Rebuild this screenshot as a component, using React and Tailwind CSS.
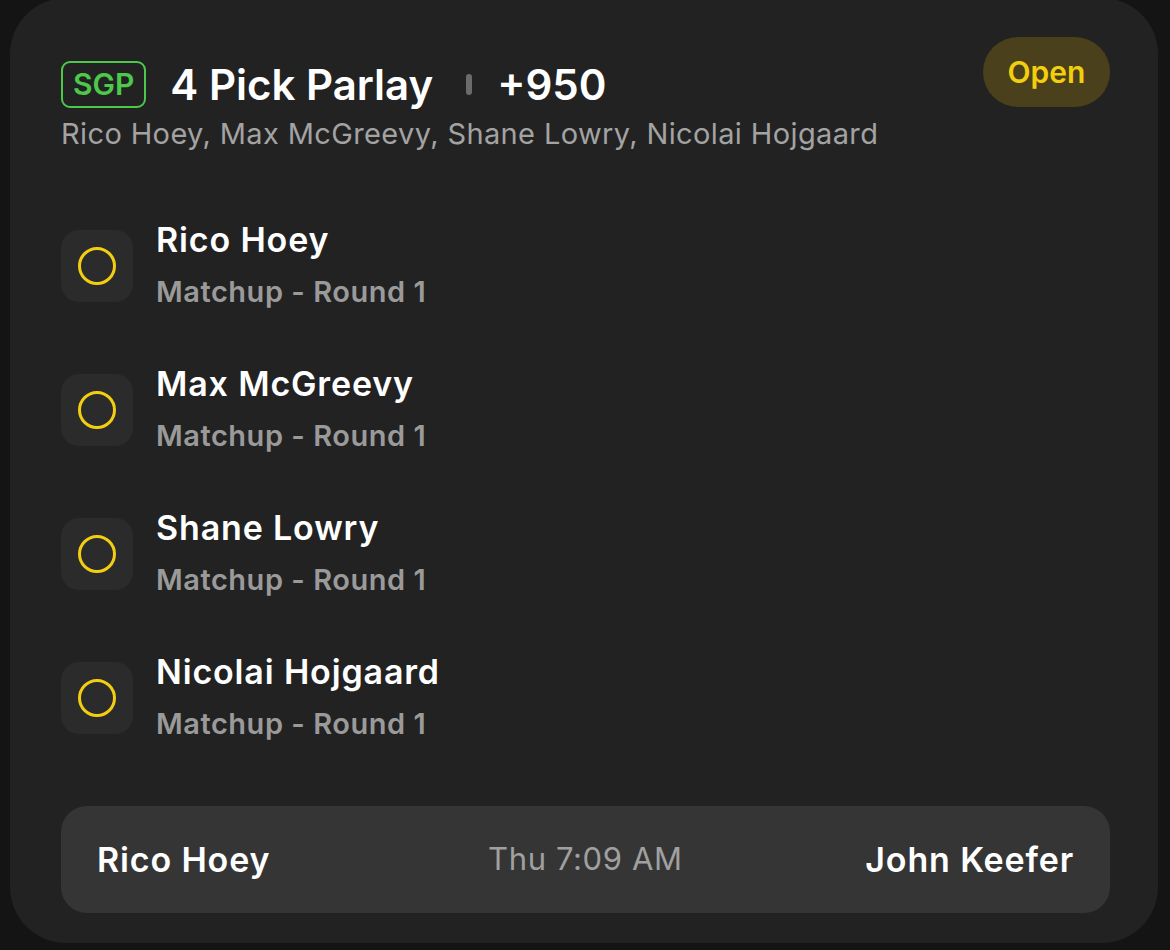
const legs = [
    { name: 'Rico Hoey', market: 'Matchup - Round 1' },
    { name: 'Max McGreevy', market: 'Matchup - Round 1' },
    { name: 'Shane Lowry', market: 'Matchup - Round 1' },
    { name: 'Nicolai Hojgaard', market: 'Matchup - Round 1' },
];

function LegRow({ name, market }) {
    return (
        <div className="flex items-center">
            <div className="w-[72px] h-[72px] rounded-[18px] bg-[#2b2b2b] flex items-center justify-center shrink-0">
                <div className="w-[38px] h-[38px] rounded-full border-[3px] border-[#f2cd12]" />
            </div>
            <div className="ml-[23px] flex flex-col gap-[16px]">
                <div className="text-[34px] leading-[36px] font-semibold tracking-[0.025em] text-white">{name}</div>
                <div className="text-[29px] leading-[36px] font-semibold tracking-[0.018em] text-[#9a9a9a]">{market}</div>
            </div>
        </div>
    );
}

export default function App() {
    return (
        <div
            className="min-h-[950px] w-[1170px] bg-[#141414] overflow-hidden"
            style={{ fontFamily: 'Inter, "Noto Sans", sans-serif' }}
        >
            <div className="ml-[10px] w-[1148px] h-[945px] -mt-[2px] rounded-[56px] bg-[#222222] pt-[39px] pl-[51px] pr-[48px]">
                <div className="flex justify-between items-start">
                    <div className="pt-[24px]">
                        <div className="flex items-center h-[47px]">
                            <div className="h-[47px] px-[10px] rounded-[9px] border-2 border-[#4cc94a] text-[#4cc94a] text-[30px] font-semibold flex items-center">
                                SGP
                            </div>
                            <div className="ml-[24px] text-[42px] font-semibold text-white leading-none">4 Pick Parlay</div>
                            <div className="ml-[33px] w-[6px] h-[21px] rounded-full bg-[#6b6b6b]" />
                            <div className="ml-[25px] text-[42px] font-semibold text-white leading-none">+950</div>
                        </div>
                        <div className="mt-[8px] text-[29px] leading-[36px] tracking-[0.013em] text-[#a3a3a3]">
                            Rico Hoey, Max McGreevy, Shane Lowry, Nicolai Hojgaard
                        </div>
                    </div>
                    <div className="h-[70px] w-[127px] rounded-full bg-[#4a401b] flex items-center justify-center text-[30px] font-semibold text-[#f2cf0e]">
                        Open
                    </div>
                </div>

                <div className="mt-[70px] flex flex-col gap-[56px]">
                    {legs.map((leg) => (
                        <LegRow key={leg.name} name={leg.name} market={leg.market} />
                    ))}
                </div>

                <div className="mt-[64px] h-[107px] rounded-[26px] bg-[#353535] px-[36px] flex items-center justify-between">
                    <div className="text-[34px] font-semibold tracking-[0.025em] text-white">Rico Hoey</div>
                    <div className="text-[31px] tracking-[0.02em] text-[#a0a0a0] ml-[35px]">Thu 7:09 AM</div>
                    <div className="text-[34px] font-semibold tracking-[0.025em] text-white">John Keefer</div>
                </div>
            </div>
        </div>
    );
}
